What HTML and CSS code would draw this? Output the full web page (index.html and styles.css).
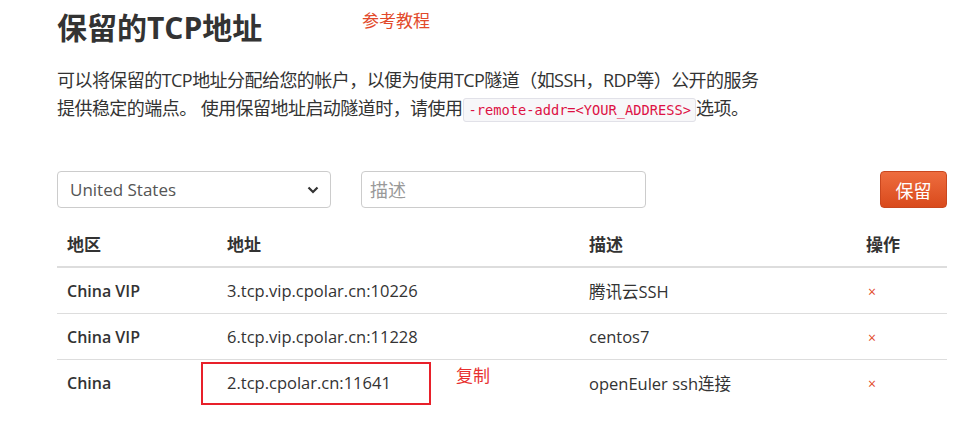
FILE: index.html
```html
<!DOCTYPE html>
<html lang="zh-CN">
<head>
    <meta charset="UTF-8">
    <link rel="stylesheet" href="styles.css">
    <title>保留的TCP地址</title>
</head>
<body>
    <div id="container">
        <a class="tutorial-link" href="#">参考教程</a>
        <h1>保留的TCP地址</h1>
        <p class="intro">
            可以将保留的TCP地址分配给您的帐户，以便为使用TCP隧道（如SSH，RDP等）公开的服务<br>
            提供稳定的端点。 使用保留地址启动隧道时，请使用<code>-remote-addr=&lt;YOUR_ADDRESS&gt;</code>选项。
        </p>

        <div class="reserve-form">
            <div class="select-wrap">
                <select id="region">
                    <option>United States</option>
                    <option>China</option>
                    <option>China VIP</option>
                </select>
                <svg class="chevron" width="12" height="8" viewBox="0 0 12 8"><path d="M1.5 1.5 L6 6 L10.5 1.5" fill="none" stroke="#333" stroke-width="2.2"/></svg>
            </div>
            <input type="text" id="description" placeholder="描述">
            <button id="reserve">保留</button>
        </div>

        <table id="addressTable">
            <thead>
                <tr>
                    <th class="col-region">地区</th>
                    <th class="col-address">地址</th>
                    <th class="col-desc">描述</th>
                    <th class="col-action">操作</th>
                </tr>
            </thead>
            <tbody>
                <tr>
                    <td class="region">China VIP</td>
                    <td>3.tcp.vip.cpolar.cn:10226</td>
                    <td>腾讯云SSH</td>
                    <td><a class="delete" href="#">×</a></td>
                </tr>
                <tr>
                    <td class="region">China VIP</td>
                    <td>6.tcp.vip.cpolar.cn:11228</td>
                    <td>centos7</td>
                    <td><a class="delete" href="#">×</a></td>
                </tr>
                <tr>
                    <td class="region">China</td>
                    <td class="marked">2.tcp.cpolar.cn:11641<span class="mark-box"></span><span class="mark-note">复制</span></td>
                    <td>openEuler ssh连接</td>
                    <td><a class="delete" href="#">×</a></td>
                </tr>
            </tbody>
        </table>
    </div>
</body>
</html>
```

FILE: styles.css
```css
body {
    font-family: "Open Sans", "Noto Sans CJK SC", sans-serif;
    margin: 0;
    padding: 0;
    background-color: #ffffff;
    color: #333;
}

#container {
    position: relative;
    width: 890px;
    padding: 10px 0 0 57px;
}

.tutorial-link {
    position: absolute;
    left: 362px;
    top: 7px;
    font-size: 17px;
    color: #e2492a;
    text-decoration: none;
}

h1 {
    font-size: 30px;
    font-weight: bold;
    line-height: 36px;
    margin: 0;
    color: #333;
}

.intro {
    font-size: 18px;
    line-height: 28px;
    margin: 20px 0 0;
    letter-spacing: -0.55px;
}

code {
    font-family: "DejaVu Sans Mono", monospace;
    font-size: 13.7px;
    letter-spacing: 0;
    color: #dd1144;
    background-color: #f7f7f9;
    border: 1px solid #e1e1e8;
    border-radius: 3px;
    padding: 3px 4px;
    margin-left: 1px;
}

.reserve-form {
    display: flex;
    align-items: center;
    margin-top: 47px;
}

.select-wrap {
    position: relative;
    width: 274px;
}

select {
    width: 100%;
    height: 37px;
    font-family: inherit;
    font-size: 17px;
    color: #555;
    padding: 0 12px;
    border: 1px solid #ccc;
    border-radius: 4px;
    background-color: #fff;
    appearance: none;
}

.chevron {
    position: absolute;
    right: 12px;
    top: 15px;
    pointer-events: none;
}

input[type="text"] {
    width: 285px;
    height: 37px;
    box-sizing: border-box;
    margin-left: 30px;
    padding: 0 8px;
    font-family: inherit;
    font-size: 18px;
    border: 1px solid #ccc;
    border-radius: 4px;
}

input::placeholder {
    color: #999;
}

#reserve {
    margin-left: auto;
    width: 67px;
    height: 37px;
    font-family: inherit;
    font-size: 18px;
    color: #fff;
    border: 1px solid #c9471f;
    border-radius: 4px;
    background: linear-gradient(#ee6d3f, #d94a1c);
    cursor: pointer;
}

table {
    width: 890px;
    border-collapse: collapse;
    margin-top: 13px;
    font-size: 16.5px;
}

th, td {
    height: 45px;
    padding: 0 10px;
    text-align: left;
    border-bottom: 1px solid #ddd;
}

th {
    font-size: 17px;
    font-weight: bold;
    border-bottom-width: 2px;
}

tbody tr:last-child td {
    border-bottom: none;
}

.col-region { width: 140px; }
.col-address { width: 342px; }
.col-desc { width: 257px; }

td.region {
    font-weight: 600;
    font-size: 16px;
}

.delete {
    color: #e2492a;
    text-decoration: none;
    font-size: 14px;
    padding-left: 2px;
}

.marked {
    position: relative;
}

.mark-box {
    position: absolute;
    left: -16px;
    top: 2px;
    width: 226px;
    height: 39px;
    border: 2px solid #e8202a;
}

.mark-note {
    position: absolute;
    left: 239px;
    top: 2px;
    font-size: 17px;
    color: #e8302f;
}
```
